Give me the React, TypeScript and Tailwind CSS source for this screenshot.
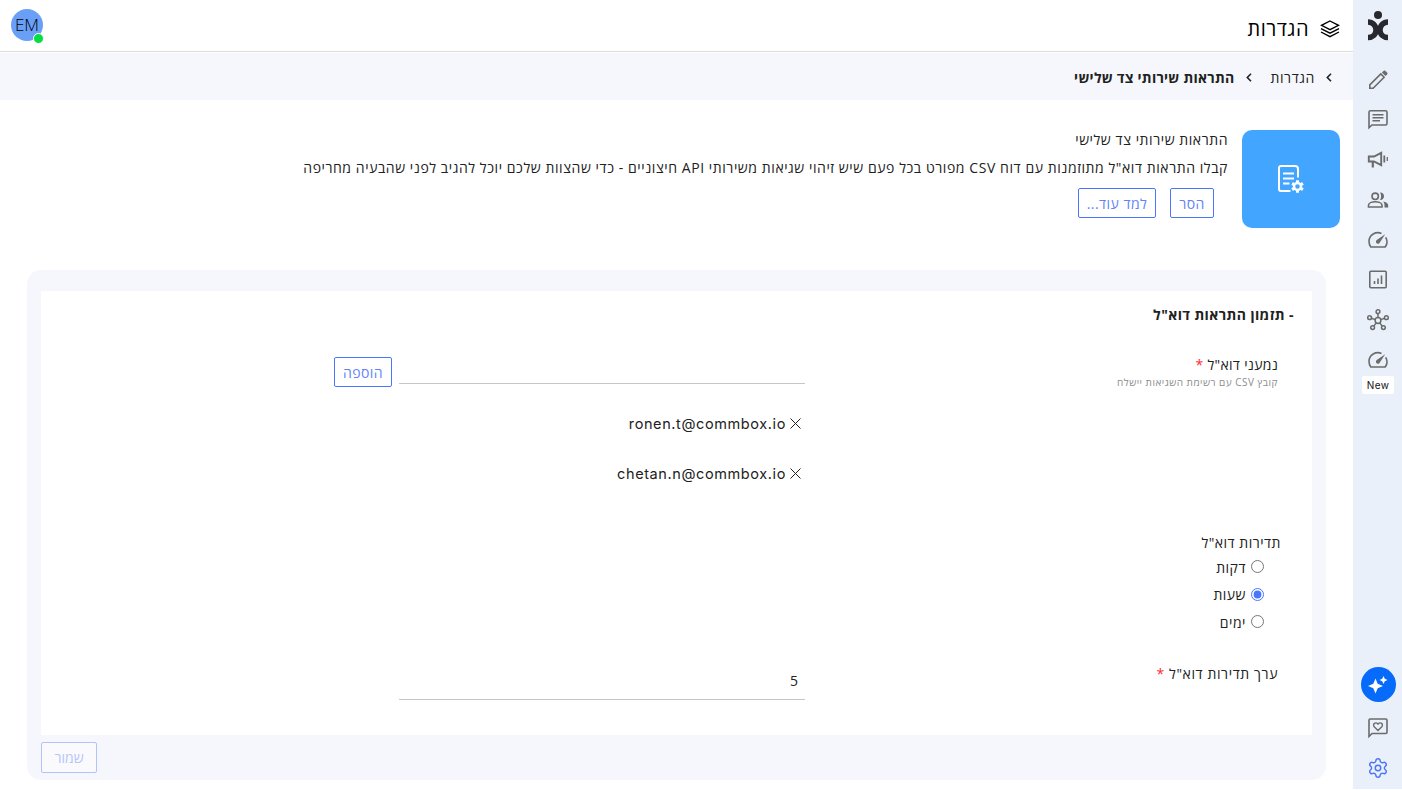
import type { ReactNode } from "react";
import { Settings } from "lucide-react";

const EMAILS = ["ronen.t@commbox.io", "chetan.n@commbox.io"];

const PERIODS = [
  { label: "דקות", checked: false, gap: "h-[27px]" },
  { label: "שעות", checked: true, gap: "h-[28px]" },
  { label: "ימים", checked: false, gap: "h-[27px]" },
];

function Logo() {
  return (
    <svg width="22" height="30" viewBox="0 0 22 30" fill="none" stroke="#27292e">
      <circle cx="11" cy="4" r="4" fill="#27292e" stroke="none" />
      <path d="M1 11C5.500 11 9 14.500 9 19C9 23.500 5.500 26.500 1 26.500" strokeWidth="5.500" />
      <path d="M21 11C16.500 11 13 14.500 13 19C13 23.500 16.500 26.500 21 26.500" strokeWidth="5.500" />
    </svg>
  );
}

function Layers() {
  return (
    <svg width="20" height="18" viewBox="0 0 20 18" fill="none" stroke="#000" strokeWidth="1.400">
      <path d="M10 1L18.500 5.300L10 9.600L1.500 5.300Z" />
      <path d="M1 8.600L10 13.200L19 8.600" />
      <path d="M1 12L10 16.700L19 12" />
    </svg>
  );
}

function Icon({ children }: { children: ReactNode }) {
  return (
    <svg width="22" height="22" viewBox="0 0 22 22" fill="none" stroke="currentColor" strokeWidth="1.600">
      {children}
    </svg>
  );
}

function Pencil() {
  return (
    <Icon>
      <path d="M2.800 19.200V15.900L13.800 4.900L17.100 8.200L6.100 19.200Z" />
      <path d="M14.900 3.500L16.700 1.800Q17.500 1.200 18.200 1.700L20.300 3.800Q20.800 4.500 20.200 5.300L18.500 7.100Z" fill="currentColor" stroke="none" />
    </Icon>
  );
}

function Chat() {
  return (
    <Icon>
      <path d="M2 18.700V3.200Q2 1.700 3.500 1.700H18.500Q20 1.700 20 3.200V14.500Q20 16 18.500 16H5Z" />
      <path d="M5.500 5.700H16.500M5.500 8.700H16.500M5.500 11.700H13" strokeWidth="1.400" />
    </Icon>
  );
}

function Megaphone() {
  return (
    <Icon>
      <path d="M1.800 7.500H7L14.200 3.800V16.200L7 12.500H1.800Z" strokeWidth="1.900" />
      <path d="M5.800 12.500V18.500" strokeWidth="2.200" />
      <path d="M17.300 6.500V13.500" strokeWidth="1.800" />
      <path d="M20.300 8V12" strokeWidth="1.300" />
    </Icon>
  );
}

function People() {
  return (
    <Icon>
      <circle cx="8.200" cy="7.300" r="3.200" />
      <path d="M1.500 18V16.300C1.500 14 5 12.800 8.200 12.800C11.500 12.800 15 14 15 16.300V18Z" />
      <path d="M13 3.600C15.500 3.500 17 5.200 17 7.300C17 9.400 15.500 11.200 13 11C14.500 8.800 14.500 5.800 13 3.600Z" fill="currentColor" stroke="none" />
      <path d="M16 12.500C19 13 21.200 14.200 21.200 16.500V18.600H17.500V16.500C17.500 14.800 17 13.500 16 12.500Z" fill="currentColor" stroke="none" />
    </Icon>
  );
}

function Gauge() {
  return (
    <Icon>
      <path d="M14.500 4.400C9 2.200 2 5.500 2 12.500C2 14.800 2.700 16.500 3.800 18H18.200C20.400 15 20.500 11.500 18.700 8.400" />
      <path d="M18.200 5.200L12.500 13.900C11.600 15 10.100 15 9.400 14.100C8.700 13.200 8.800 12 9.700 11.100Z" fill="currentColor" stroke="none" />
    </Icon>
  );
}

function Chart() {
  return (
    <Icon>
      <rect x="2.800" y="2.300" width="16.400" height="16.400" rx="1" />
      <path d="M7.500 12V15M11 9.500V15M14.500 6.500V15" strokeWidth="1.600" />
    </Icon>
  );
}

function Hub() {
  return (
    <svg width="22" height="22" viewBox="0 0 22 22" fill="none" stroke="currentColor" strokeWidth="1.500">
      <circle cx="11" cy="11.500" r="2.900" />
      <circle cx="11" cy="2.700" r="1.900" />
      <circle cx="2.600" cy="8.700" r="1.900" />
      <circle cx="19.400" cy="8.700" r="1.900" />
      <circle cx="5.600" cy="18.600" r="1.900" />
      <circle cx="16.400" cy="18.600" r="1.900" />
      <path d="M11 4.600V8.600M4.400 9.300L8.200 10.600M17.600 9.300L13.800 10.600M6.800 17.100L9.200 13.900M15.200 17.100L12.800 13.900" />
    </svg>
  );
}

function HeartBubble() {
  return (
    <svg width="20" height="20" viewBox="0 0 20 20" fill="none" stroke="currentColor" strokeWidth="1.600">
      <path d="M1 18.500V2.200Q1 1 2.200 1H17.800Q19 1 19 2.200V14.300Q19 15.500 17.800 15.500H4Z" />
      <path d="M10 12.500L6.200 8.700C4.200 6.200 7.500 3.300 10 6.100C12.500 3.300 15.800 6.200 13.800 8.700Z" strokeWidth="1.400" />
    </svg>
  );
}

function Sparkles() {
  return (
    <svg width="20" height="18" viewBox="0 0 20 18" fill="#fff">
      <path d="M7.500 2.500L9.700 7.800L15 10L9.700 12.200L7.500 17.500L5.300 12.200L0 10L5.300 7.800Z" />
      <path d="M15.500 0L16.800 2.700L19.500 4L16.800 5.300L15.500 8L14.200 5.300L11.500 4L14.200 2.700Z" />
    </svg>
  );
}

function DocumentGear() {
  return (
    <svg width="28" height="28" viewBox="0 0 28 28" fill="none" stroke="#fff" strokeWidth="2">
      <path d="M13.500 26H4Q2 26 2 24V3Q2 1 4 1H18Q21 1 21 4V12.500" />
      <path d="M6 8.500H17M6 13.500H17M6 18.500H12.500" />
      <circle cx="20.500" cy="21.500" r="3.500" strokeWidth="2.400" />
      <path d="M20.500 15.200V18M20.500 25V27.800M15.100 18.400L17.200 19.700M23.800 23.300L25.900 24.600M15.100 24.600L17.200 23.300M23.800 19.700L25.900 18.400" strokeWidth="3" />
    </svg>
  );
}

function Chevron() {
  return (
    <svg width="6" height="9" viewBox="0 0 6 9" fill="none" stroke="#1f2226" strokeWidth="1.600">
      <path d="M5 0.700L1.300 4.500L5 8.300" />
    </svg>
  );
}

function NavIcon({ children }: { children: ReactNode }) {
  return <div className="flex h-10 w-full items-center justify-center pt-px">{children}</div>;
}

function Sidebar() {
  return (
    <aside className="flex h-[789px] w-[49px] shrink-0 flex-col items-center bg-[#e9f0fa] text-[#6b6b6b]">
      <div className="flex h-[59px] pt-[11px] pl-px">
        <Logo />
      </div>
      <NavIcon><Pencil /></NavIcon>
      <NavIcon><Chat /></NavIcon>
      <NavIcon><Megaphone /></NavIcon>
      <NavIcon><People /></NavIcon>
      <NavIcon><Gauge /></NavIcon>
      <NavIcon><Chart /></NavIcon>
      <NavIcon><Hub /></NavIcon>
      <NavIcon><Gauge /></NavIcon>
      <div dir="ltr" className="-mt-[3px] ml-px flex h-[18px] w-[32px] shrink-0 items-center justify-center rounded-[2px] bg-white font-['Inter'] text-[10px] tracking-[0.4px] text-[#111]">
        New
      </div>
      <div className="mt-auto ml-px flex size-[35px] shrink-0 items-center justify-center rounded-full bg-[#066bfa]">
        <Sparkles />
      </div>
      <div className="mt-[6px] flex h-10 shrink-0 items-center"><HeartBubble /></div>
      <div className="flex h-[41px] shrink-0 items-start pt-[9px] text-[#4c74f5]"><Settings size={22} strokeWidth={1.600} /></div>
    </aside>
  );
}

function OutlineButton({ className, children }: { className: string; children: ReactNode }) {
  return (
    <button className={`flex h-[30px] shrink-0 items-center justify-center whitespace-nowrap rounded-[2px] border border-[#4a76fd] bg-white text-[14px] tracking-[0.450px] text-[#5f83fa] ${className}`}>
      {children}
    </button>
  );
}

export default function App() {
  return (
    <div dir="rtl" className="flex h-[790px] w-[1402px] overflow-hidden bg-white font-['Open_Sans','Liberation_Sans',sans-serif] text-[14px] text-[#212121]">
      <Sidebar />
      <main className="flex min-w-0 flex-1 flex-col">
        <header className="flex h-[52px] shrink-0 items-center justify-between border-b border-[#dcdcdc] pr-[13px] pl-[11px]">
          <div className="flex items-center gap-[11px] pt-[6px] text-black">
            <Layers />
            <h1 className="text-[20px] leading-6 tracking-[0.500px]">הגדרות</h1>
          </div>
          <div className="relative mb-[2px] flex size-8 items-center justify-center rounded-full bg-[#6a9ff8] font-['Open_Sans'] text-[17px] font-light text-black">
            EM
            <span className="absolute -right-[1px] -bottom-[3px] size-[11px] rounded-full border border-white bg-[#07dc43]" />
          </div>
        </header>

        <nav className="mt-px flex h-[47px] shrink-0 items-center bg-[#f5f7fc] pt-px pr-[21px]">
          <Chevron />
          <span className="mr-[11px] tracking-[0.600px]">הגדרות</span>
          <span className="mr-[18px]"><Chevron /></span>
          <span className="mr-[12px] font-bold tracking-[0.240px]">התראות שירותי צד שלישי</span>
        </nav>

        <section className="flex h-[170px] shrink-0 gap-[14px] pt-[30px] pr-[13px]">
          <div className="flex size-[98px] shrink-0 items-center justify-center rounded-[10px] bg-[#42a5ff]">
            <DocumentGear />
          </div>
          <div className="whitespace-nowrap">
            <p className="h-7 leading-[20px] tracking-[0.560px]">התראות שירותי צד שלישי</p>
            <p className="h-[30px] leading-[20px] tracking-[0.570px]">
              קבלו התראות דוא"ל מתוזמנות עם דוח CSV מפורט בכל פעם שיש זיהוי שגיאות משירותי API חיצוניים - כדי שהצוות שלכם יוכל להגיב לפני שהבעיה מחריפה
            </p>
            <div className="flex gap-[14px] pr-[14px]">
              <OutlineButton className="w-[44px]">הסר</OutlineButton>
              <OutlineButton className="w-[78px]">למד עוד...</OutlineButton>
            </div>
          </div>
        </section>

        <section className="mr-[27px] ml-[27px] flex h-[510px] shrink-0 flex-col rounded-[14px] bg-[#f5f7fc] px-[14px] pt-[21px]">
          <div className="h-[444px] bg-white">
            <h2 className="h-[63px] pt-[14px] pr-[18px] leading-5 font-bold tracking-[0.400px]">- תזמון התראות דוא"ל</h2>

            <div className="flex h-[120px] pr-[34px]">
              <div className="w-[473px] pt-[1px]">
                <p className="leading-5 tracking-[0.300px]">נמעני דוא"ל <span className="text-red-500">*</span></p>
                <p className="text-[10px] leading-[14px] tracking-[0.480px] text-[#8c8c8c]">קובץ CSV עם רשימת השגיאות יישלח</p>
              </div>
              <div>
                <div className="flex gap-[7px]">
                  <div className="h-[30px] w-[406px] border-b border-[#c6c6c6]" />
                  <div className="pt-[3px]"><OutlineButton className="w-[58px]">הוספה</OutlineButton></div>
                </div>
                <ul className="pt-[12px] pr-[4px]">
                  {EMAILS.map((email) => (
                    <li key={email} className="flex h-[50px] items-center gap-[4px] pb-px">
                      <svg width="11" height="11" viewBox="0 0 11 11" stroke="#222" strokeWidth="1">
                        <path d="M0.500 0.500L10.500 10.500M10.500 0.500L0.500 10.500" />
                      </svg>
                      <span dir="ltr" className="font-['Inter'] text-[14.500px] tracking-[0.600px]">{email}</span>
                    </li>
                  ))}
                </ul>
              </div>
            </div>

            <fieldset className="mt-[59px] h-[120px] pr-[31px]">
              <legend className="h-[20px] leading-5 tracking-[0.500px]">תדירות דוא"ל</legend>
              <div className="pr-[17px]">
                {PERIODS.map((p) => (
                  <label key={p.label} className={`flex items-center gap-[5px] ${p.gap}`}>
                    <input type="radio" name="period" defaultChecked={p.checked} className="size-[13px] accent-[#4a76fd]" />
                    <span className="pt-[2px] leading-5 tracking-[0.500px]">{p.label}</span>
                  </label>
                ))}
              </div>
            </fieldset>

            <div className="flex pt-[11px] pr-[34px]">
              <p className="w-[473px] leading-5 tracking-[0.600px]">ערך תדירות דוא"ל <span className="text-red-500">*</span></p>
              <div className="h-[36px] w-[406px] border-b border-[#c6c6c6] pt-[7px] pr-[7px] leading-5">5</div>
            </div>
          </div>
          <div className="flex justify-end pt-[7px]">
            <button disabled className="h-[31px] w-[56px] rounded-[2px] border border-[#b2c3fb] bg-[#fafafd] text-[14px] text-[#b5c5fc]">שמור</button>
          </div>
        </section>
      </main>
    </div>
  );
}
